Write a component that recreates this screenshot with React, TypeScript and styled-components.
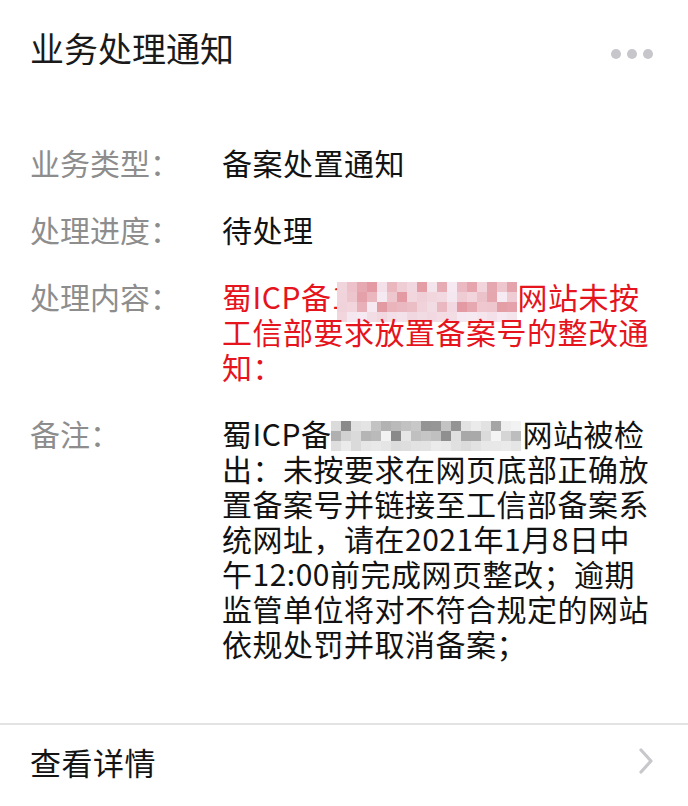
import React from 'react'
import styled, { createGlobalStyle } from 'styled-components'

const GlobalStyle = createGlobalStyle`
  html, body {
    margin: 0;
    padding: 0;
    background: #ffffff;
  }
  body {
    font-family: "Noto Sans CJK SC", "Noto Sans", "Liberation Sans", sans-serif;
    -webkit-font-smoothing: antialiased;
  }
`

const Card = styled.div`
  width: 688px;
  min-height: 806px;
  background: #ffffff;
  display: flex;
  flex-direction: column;
`

const Header = styled.div`
  display: flex;
  justify-content: space-between;
  align-items: flex-start;
  padding: 28px 35px 0 30px;
`

const Title = styled.h1`
  margin: 0;
  font-size: 34px;
  line-height: 40px;
  font-weight: 400;
  color: #1a1a1a;
`

const More = styled.div`
  display: flex;
  gap: 6px;
  margin-top: 21px;
`

const Dot = styled.span`
  width: 10px;
  height: 10px;
  border-radius: 50%;
  background: #c6c6cb;
`

const Fields = styled.div`
  display: flex;
  flex-direction: column;
  gap: 32px;
  padding: 77px 30px 0 30px;
`

const Row = styled.div`
  display: grid;
  grid-template-columns: 192px 1fr;
  font-size: 30px;
  line-height: 35px;
  letter-spacing: 0.5px;
`

const Label = styled.div`
  color: #8d8d8d;
  white-space: nowrap;
  letter-spacing: 0;
`

const Value = styled.div<{ $tone?: 'red' }>`
  color: ${(p) => (p.$tone === 'red' ? '#e5141d' : '#121212')};
`

const Line = styled.span`
  display: block;
  white-space: nowrap;
`

const MosaicSvg = styled.svg<{ $lift: number; $pull: number }>`
  display: inline-block;
  vertical-align: ${(p) => p.$lift}px;
  margin-left: ${(p) => p.$pull}px;
  margin-right: 1px;
`

const Divider = styled.div`
  height: 2px;
  background: #e3e3e3;
  margin-top: 62px;
`

const Footer = styled.div`
  display: flex;
  align-items: center;
  justify-content: space-between;
  height: 72px;
  padding: 0 34px 0 30px;
`

const FooterText = styled.span`
  font-size: 31px;
  color: #141414;
  letter-spacing: 0.5px;
`

const rng = (seed: number) => {
  let s = seed
  return () => {
    s = (s * 1103515245 + 12345) % 2147483648
    return s / 2147483648
  }
}

type MosaicProps = {
  cols: number
  rows: number
  seed: number
  tone: 'red' | 'grey'
  lift: number
  pull?: number
}

// pixelated block standing in for the blurred-out record number
const Mosaic = ({ cols, rows, seed, tone, lift, pull = 0 }: MosaicProps) => {
  const rand = rng(seed)
  const cell = 10
  const h = rows * cell
  const cells: React.ReactNode[] = []
  for (let r = 0; r < rows; r++) {
    for (let c = 0; c < cols; c++) {
      let t = rand()
      if (r === rows - 1) t = 0.75 + t * 0.25
      let fill
      if (tone === 'red') {
        const red = Math.round(226 + t * 20)
        const g = Math.round(150 + t * 85)
        fill = `rgb(${red},${g},${Math.min(246, g + 8)})`
      } else {
        const v = Math.round(135 + t * 110)
        fill = `rgb(${v},${v},${v})`
      }
      cells.push(<rect key={`${r}-${c}`} x={c * cell} y={r * cell} width={cell} height={cell} fill={fill} />)
    }
  }
  return (
    <MosaicSvg
      width={cols * cell}
      height={h}
      viewBox={`0 0 ${cols * cell} ${h}`}
      $lift={lift}
      $pull={pull}
      style={{ marginTop: -h / 2, marginBottom: -h / 2 }}
    >
      {cells}
    </MosaicSvg>
  )
}

const Chevron = () => (
  <svg width="16" height="28" viewBox="0 0 16 28" fill="none">
    <polyline points="3,3 13,14 3,25" stroke="#c8c8cc" strokeWidth="3.2" strokeLinecap="round" strokeLinejoin="round" />
  </svg>
)

export default function App() {
  return (
    <>
      <GlobalStyle />
      <Card>
        <Header>
          <Title>业务处理通知</Title>
          <More>
            <Dot />
            <Dot />
            <Dot />
          </More>
        </Header>

        <Fields>
          <Row>
            <Label>业务类型：</Label>
            <Value>
              <Line>备案处置通知</Line>
            </Value>
          </Row>
          <Row>
            <Label>处理进度：</Label>
            <Value>
              <Line>待处理</Line>
            </Value>
          </Row>
          <Row>
            <Label>处理内容：</Label>
            <Value $tone="red">
              <Line>
                蜀ICP备1
                <Mosaic cols={18} rows={4} seed={17} tone="red" lift={7} pull={-12} />
                网站未按
              </Line>
              <Line>工信部要求放置备案号的整改通</Line>
              <Line>知：</Line>
            </Value>
          </Row>
          <Row>
            <Label>备注：</Label>
            <Value>
              <Line>
                蜀ICP备
                <Mosaic cols={19} rows={3} seed={91} tone="grey" lift={10} pull={0} />
                网站被检
              </Line>
              <Line>出：未按要求在网页底部正确放</Line>
              <Line>置备案号并链接至工信部备案系</Line>
              <Line>统网址，请在2021年1月8日中</Line>
              <Line>午12:00前完成网页整改；逾期</Line>
              <Line>监管单位将对不符合规定的网站</Line>
              <Line>依规处罚并取消备案；</Line>
            </Value>
          </Row>
        </Fields>

        <Divider />
        <Footer>
          <FooterText>查看详情</FooterText>
          <Chevron />
        </Footer>
      </Card>
    </>
  )
}
